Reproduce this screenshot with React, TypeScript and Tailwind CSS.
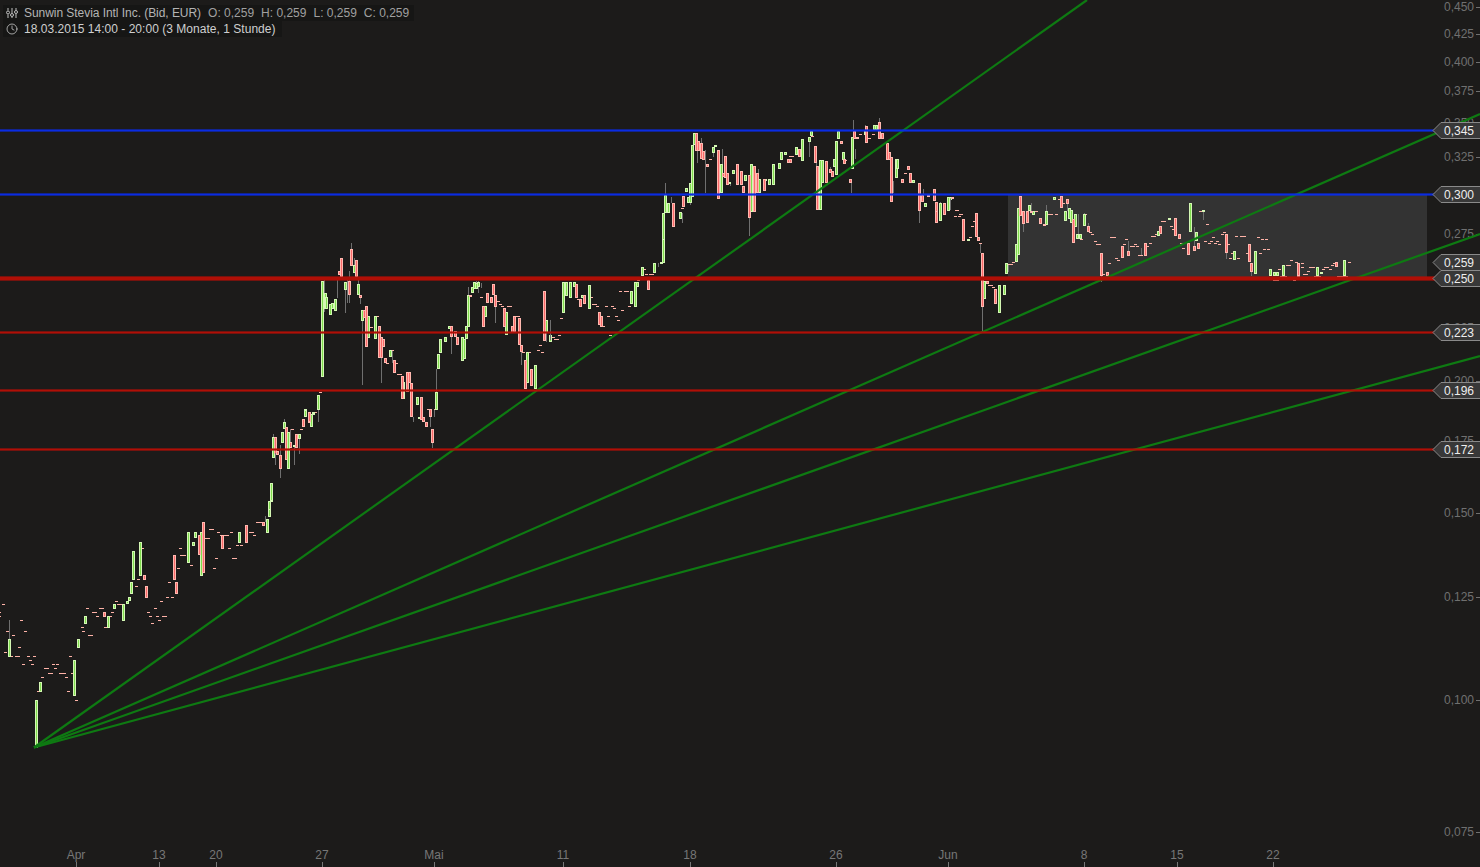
import React from 'react'
import { Clock } from 'lucide-react'

type Section = {
  ox: number
  oy: number
  up: number[][] // center x, top, bottom (in 3x crop coords)
  down: number[][]
  wicks: number[][]
  dashes: number[][] // center x, y, width
}

const sections: Section[] = [
  {
    ox: 0, oy: 500,
    up: [[109,600,745],[121,547,575],[223,481,587],[235,418,443],[256,349,371],[28,418,470],[325,349,383],[343,313,326],[370,313,362],[382,304,313],[388,292,304],[394,247,281],[400,154,239],[421,127,227],[565,97,188],[580,127,137],[586,97,115],[604,97,227],[718,97,128],[802,58,98],[808,4,50],[814,0,5]],
    down: [[313,337,350],[433,226,239],[439,259,293],[523,166,239],[529,247,281],[598,106,166],[610,67,218],[667,106,146],[739,76,128],[790,67,77]],
    wicks: [[28,360,418],[796,48,67]],
    dashes: [[8,313,8],[0,337,6],[0,349,3],[64,361,8],[20,394,8],[40,406,8],[76,394,8],[58,442,8],[14,457,8],[34,469,8],[50,469,14],[85,469,8],[103,469,8],[91,481,8],[70,493,8],[97,493,8],[139,505,14],[160,493,8],[172,493,8],[166,505,8],[151,520,14],[127,532,8],[185,520,22],[217,520,8],[199,532,8],[205,574,8],[229,601,8],[115,574,8],[211,469,8],[245,382,8],[250,394,8],[271,406,14],[262,325,8],[283,337,14],[304,325,14],[292,349,8],[337,337,8],[328,349,14],[319,382,14],[349,304,8],[361,313,20],[409,259,8],[415,238,8],[427,145,8],[445,337,8],[451,349,8],[457,370,8],[466,325,8],[472,349,8],[478,361,8],[484,304,8],[493,349,14],[502,292,8],[517,292,8],[508,247,8],[535,205,8],[541,145,8],[550,166,18],[574,196,8],[622,115,14],[634,88,14],[649,175,8],[643,205,8],[655,97,8],[672,106,28],[688,145,8],[694,97,8],[703,175,14],[712,136,8],[724,136,8],[754,97,14],[763,106,8],[778,67,22]],
  },
  {
    ox: 260, oy: 230,
    up: [[187,152,440],[195,190,236],[199,202,236],[211,222,254],[217,220,236],[226,208,242],[256,156,180],[283,105,130],[295,162,196],[307,241,272],[325,258,325],[346,259,328],[391,361,380],[430,455,508],[472,500,524],[478,562,568],[529,487,540],[535,373,418],[541,328,368],[556,322,335],[568,289,296],[607,322,392],[613,328,386],[619,289,328],[625,196,290],[637,172,190],[643,155,178],[649,158,178],[655,155,172],[676,229,260],[739,247,316],[802,367,460],[826,405,478],[859,271,310],[871,316,335],[175,496,540],[136,538,562],[154,552,592],[160,546,554],[40,622,685],[67,607,638],[73,576,598],[85,606,690],[103,645,652],[118,613,628]],
    down: [[244,85,140],[238,124,134],[274,58,107],[289,91,140],[268,152,196],[301,196,203],[313,240,264],[319,229,352],[358,289,385],[364,322,385],[370,328,352],[376,385,400],[403,391,428],[427,439,508],[442,427,487],[448,427,460],[454,460,562],[484,502,570],[490,562,576],[499,577,592],[511,538,562],[517,598,638],[574,289,322],[586,304,322],[592,322,346],[631,196,202],[670,229,290],[682,190,220],[694,202,220],[700,163,196],[706,196,230],[733,235,290],[757,289,310],[763,259,307],[778,265,346],[784,346,367],[796,391,478],[814,418,468],[853,184,334],[46,622,672],[52,664,676],[61,676,690],[79,592,690],[91,637,655],[109,613,655],[130,568,592],[148,547,578]],
    wicks: [[274,40,58],[283,85,105],[268,124,218],[232,140,205],[192,150,245],[256,180,250],[262,150,218],[295,150,162],[301,203,222],[307,272,464],[364,385,458],[397,361,400],[460,562,575],[511,562,590],[523,540,560],[529,418,487],[517,638,655],[574,322,372],[625,170,196],[649,152,158],[655,152,188],[664,160,174],[706,230,280],[784,367,404],[859,310,335],[871,271,312],[175,540,575],[118,628,672],[103,652,690],[91,598,640],[61,645,676],[40,612,622],[73,568,576]],
    dashes: [[333,290,8],[350,259,8],[418,433,14],[409,400,8],[382,400,8],[397,361,8],[181,487,8],[163,547,8],[97,598,8],[124,598,8],[508,538,12],[526,538,8],[664,202,8],[715,214,8],[721,223,8],[727,229,8],[748,229,14],[770,259,14],[790,367,8],[808,367,8],[835,361,8],[841,346,8],[847,367,8],[880,322,8],[889,328,14],[898,316,8]],
  },
  {
    ox: 255, oy: 410,
    up: [[100,67,178],[49,220,274],[43,274,300],[151,0,22],[169,12,52],[175,6,12]],
    down: [[76,136,178],[145,28,52],[163,6,37]],
    wicks: [[76,178,204],[118,112,166],[61,130,166],[190,6,35]],
    dashes: [[112,58,8],[139,58,8],[181,6,8]],
  },
  {
    ox: 540, oy: 230,
    up: [[70,157,248],[79,157,198],[91,157,204],[103,157,172],[127,196,205],[148,166,236],[274,184,222],[286,157,230],[292,157,172],[307,112,138],[343,100,128],[370,0,98],[364,96,100]],
    down: [[109,163,204],[121,208,230],[133,196,222],[178,247,286],[184,259,290],[325,151,180]],
    wicks: [[355,100,110],[31,271,330]],
    dashes: [[64,265,8],[163,223,14],[172,229,8],[199,229,8],[217,229,8],[223,235,8],[205,259,8],[229,259,8],[235,271,8],[247,241,8],[241,184,8],[259,184,14],[268,229,8],[187,289,14],[154,202,8],[115,208,8],[313,118,8],[319,133,8],[334,133,14],[295,151,8],[211,316,8]],
  },
  {
    ox: 640, oy: 110,
    up: [[70,310,390],[76,256,310],[85,280,310],[121,305,328],[139,235,245],[145,260,280],[151,220,278],[157,106,260],[163,68,106],[220,110,130],[226,106,110],[244,163,250],[280,181,191],[268,216,220],[316,196,212],[334,163,305],[358,208,248],[376,208,212],[388,208,225],[400,163,226],[418,160,178],[424,127,150],[436,127,135],[469,112,134],[487,88,154],[508,80,95],[514,64,78],[535,256,300],[541,151,300],[547,151,218],[583,148,172],[589,94,196],[595,64,88],[610,127,150],[637,80,178],[703,44,60],[709,44,60],[675,64,75],[767,148,204],[772,148,178],[814,211,218],[820,211,218],[856,280,290],[901,280,334],[925,262,302],[931,262,270]],
    down: [[100,280,352],[130,259,290],[169,68,124],[175,92,124],[184,100,148],[190,124,150],[202,163,172],[235,121,268],[250,190,202],[256,139,205],[262,190,226],[292,163,226],[304,184,226],[310,229,250],[328,196,325],[343,169,305],[352,190,250],[373,208,244],[445,148,160],[451,148,160],[478,118,142],[526,109,160],[532,169,300],[559,154,218],[571,178,190],[577,184,202],[604,94,102],[613,148,163],[631,208,220],[643,64,88],[652,80,88],[679,49,100],[718,37,88],[727,70,88],[742,100,150],[748,127,150],[754,142,277],[787,208,218],[805,169,181],[811,190,218],[838,220,304],[847,256,277],[865,256,262],[883,238,272],[889,277,340],[913,280,314],[937,262,268]],
    wicks: [[76,220,256],[94,262,280],[127,310,338],[151,278,285],[172,124,160],[184,85,100],[196,120,250],[220,130,140],[247,118,165],[271,220,228],[328,325,377],[355,178,190],[529,120,168],[508,95,140],[571,172,178],[640,30,64],[634,220,250],[646,118,148],[676,44,64],[718,24,37],[760,212,250],[838,304,338],[850,238,256],[901,277,280]],
    dashes: [[211,148,8],[127,295,8],[454,139,14],[517,78,8],[661,73,8],[688,85,8],[700,73,8],[796,190,8],[949,301,8],[946,319,8],[961,313,8],[958,319,8],[616,150,8]],
  },
  {
    ox: 930, oy: 190,
    up: [[30,40,94],[55,22,62],[115,148,154],[163,272,328],[207,286,368]],
    down: [[100,88,154],[139,70,142],[145,142,154],[157,190,350],[19,64,100],[43,40,74],[67,20,28],[196,298,343],[172,272,283]],
    wicks: [[151,160,190],[157,350,424],[61,28,60]],
    dashes: [[82,61,8],[76,79,8],[88,79,8],[94,73,8],[121,142,8],[127,109,8],[133,94,8],[150,160,8],[178,286,8],[184,286,8],[190,292,8]],
  },
  {
    ox: 970, oy: 185,
    up: [[103,301,331],[109,235,268],[139,178,232],[145,70,211],[178,61,77],[190,78,89],[229,79,120],[253,37,44],[286,79,109],[298,70,103],[304,76,115],[316,88,127],[322,148,163],[331,148,163],[343,88,124],[565,139,154],[598,100,103],[661,55,142],[679,142,169],[700,76,79],[793,199,226],[856,199,268],[901,253,274],[913,262,274],[922,262,274],[940,241,274],[1042,247,274],[1054,262,268],[1123,226,274]],
    down: [[151,34,94],[160,79,118],[172,79,115],[184,79,85],[211,100,116],[223,118,124],[274,34,70],[292,43,56],[310,103,175],[355,124,142],[394,205,274],[412,262,272],[457,184,220],[475,199,214],[526,175,214],[571,124,148],[616,100,154],[628,148,163],[655,175,211],[673,184,199],[685,175,193],[769,148,205],[838,178,232],[844,235,262],[985,235,274],[1099,232,247]],
    wicks: [[115,240,260],[160,118,140],[184,55,79],[229,60,79],[292,56,79],[325,88,148],[343,84,90],[355,115,124],[394,274,290],[475,168,199],[514,190,214],[673,127,184],[700,79,106],[769,205,223],[844,262,274]],
    dashes: [[120,238,14],[130,232,10],[199,79,8],[240,88,16],[259,88,8],[268,43,8],[280,55,8],[334,163,8],[346,88,8],[361,142,8],[367,148,8],[376,169,8],[385,178,14],[400,268,12],[418,235,8],[429,157,18],[439,220,8],[445,226,8],[463,178,8],[469,163,8],[487,184,14],[496,178,8],[502,184,8],[511,211,14],[532,184,8],[541,175,8],[550,154,14],[559,148,8],[580,109,14],[604,124,8],[610,133,8],[634,175,8],[640,190,8],[691,79,8],[712,118,8],[706,169,8],[718,175,8],[724,169,8],[730,157,8],[736,175,8],[742,169,8],[748,178,8],[757,148,8],[763,142,8],[775,178,8],[781,220,8],[787,205,8],[799,154,8],[805,220,8],[820,154,18],[832,205,8],[865,157,8],[871,205,8],[877,163,8],[889,163,8],[883,193,8],[895,193,8],[928,253,8],[955,241,14],[964,226,8],[979,232,8],[997,235,8],[997,247,8],[1006,268,14],[1015,259,8],[1025,247,18],[1060,253,8],[1069,247,14],[1081,253,8],[1087,241,8],[1093,235,8],[1138,232,8],[1042,274,20],[1117,274,32],[973,286,8],[917,286,18],[940,274,20],[985,274,8]],
  },
]

const axisLabels: [string, number][] = [
  ['0,450', 7], ['0,425', 34], ['0,400', 62], ['0,375', 91], ['0,350', 123], ['0,325', 157],
  ['0,275', 234], ['0,225', 328], ['0,200', 381], ['0,175', 441], ['0,150', 513], ['0,125', 597],
  ['0,100', 700], ['0,075', 832],
]

const timeLabels: [string, number][] = [
  ['Apr', 76], ['13', 159], ['20', 216], ['27', 322], ['Mai', 434], ['11', 563],
  ['18', 690], ['26', 836], ['Jun', 948], ['8', 1084], ['15', 1177], ['22', 1273],
]

const priceTags: [string, number][] = [
  ['0,345', 130], ['0,300', 194], ['0,259', 262], ['0,250', 278], ['0,223', 332], ['0,196', 390], ['0,172', 449],
]

const fanEnds = [[1087, 0], [1480, 114], [1480, 234], [1480, 356]]

const levels = [
  { y: 129, h: 3, color: '#0a2ce2' },
  { y: 193, h: 3, color: '#0a2ce2' },
  { y: 276, h: 5, color: '#b00f06' },
  { y: 331, h: 3, color: '#b00f06' },
  { y: 389, h: 3, color: '#b00f06' },
  { y: 448, h: 3, color: '#b00f06' },
]

function Candles({ s }: { s: Section }) {
  const px = (z: number) => Math.round(s.ox + z / 3)
  const py = (z: number) => Math.round(s.oy + z / 3)
  const bar = (b: number[], edge: string, core: string, key: string) => {
    const x = px(b[0]) - 1
    const y = py(b[1])
    const h = Math.max(py(b[2]) - y, 2)
    return (
      <g key={key}>
        <rect x={x} y={y} width={3} height={h} fill={edge} />
        {h > 2 && <rect x={x + 1} y={y + 1} width={1} height={h - 2} fill={core} />}
      </g>
    )
  }
  return (
    <g shapeRendering="crispEdges">
      {s.wicks.map((w, i) => (
        <rect key={'w' + i} x={px(w[0])} y={py(w[1])} width={1} height={py(w[2]) - py(w[1])} fill="#6f6f6f" />
      ))}
      {s.dashes.map((d, i) => {
        const w = Math.max(Math.round(d[2] / 3), 1)
        return <rect key={'d' + i} x={px(d[0]) - Math.floor(w / 2)} y={py(d[1])} width={w} height={1} fill="#ffb3a8" />
      })}
      {s.up.map((b, i) => bar(b, '#d4f7b4', '#7fdc4e', 'u' + i))}
      {s.down.map((b, i) => bar(b, '#ffb9b0', '#f96a6a', 'r' + i))}
    </g>
  )
}

function PriceTag({ label, y }: { label: string; y: number }) {
  return (
    <g>
      <polygon
        points={`1433,${y + 0.5} 1441,${y - 7.5} 1481,${y - 7.5} 1481,${y + 8.5} 1441,${y + 8.5}`}
        fill="#383838"
        stroke="#8a8a8a"
        strokeWidth="1"
      />
      <text x={1444} y={y + 5} fontSize="12" fill="#eeeeee">{label}</text>
    </g>
  )
}

export default function App() {
  return (
    <div className="relative w-[1480px] h-[867px] overflow-hidden bg-[#1c1b1a] font-['Liberation_Sans',Arial,sans-serif]">
      <svg width="1480" height="867" viewBox="0 0 1480 867" className="block">
        {/* Achsen */}
        {axisLabels.map(([label, y]) => (
          <g key={label}>
            <text x={1444} y={y + 4} fontSize="12" fill="#707070">{label}</text>
            <rect x={1476} y={y} width={4} height={1} fill="#707070" />
          </g>
        ))}
        {timeLabels.map(([label, x]) => (
          <g key={label}>
            <text x={x} y={859} fontSize="12" fill="#777777" textAnchor="middle">{label}</text>
            <rect x={x} y={862} width={1} height={5} fill="#777777" />
          </g>
        ))}

        <rect x={1008} y={194} width={419} height={84} fill="#333333" />

        {sections.map((s, i) => <Candles key={i} s={s} />)}

        {/* Fan lines */}
        {fanEnds.map(([x, y], i) => (
          <line key={i} x1={34} y1={747.5} x2={x} y2={y} stroke="#0e7a12" strokeWidth="2.2" />
        ))}

        <g shapeRendering="crispEdges">
          {levels.map(l => (
            <g key={l.y}>
              <rect x={0} y={l.y} width={1480} height={l.h} fill={l.color} opacity={0.6} />
              <rect x={0} y={l.y + 1} width={1480} height={l.h - 2} fill={l.color} />
            </g>
          ))}
        </g>

        {priceTags.map(([label, y]) => <PriceTag key={label} label={label} y={y} />)}
      </svg>

      {/* Chart header */}
      <div className="absolute left-[3px] top-[5px] flex flex-col items-start text-[12px] leading-[16px]">
        <div className="flex items-center gap-[6px] bg-[#161615] pl-[3px] pr-[5px] h-[16px] text-[#a8a8a8]">
          <svg width="12" height="12" viewBox="0 0 12 12" fill="none" stroke="#c0c0c0" strokeWidth="1">
            <path d="M2 1v2.5M2 7.5V11M6 1v5M6 10v1M10 1v2M10 7v4" />
            <circle cx="2" cy="5.5" r="1.5" />
            <circle cx="6" cy="8" r="1.5" />
            <circle cx="10" cy="5" r="1.5" />
          </svg>
          <span className="tracking-[-0.05px] text-[#b4b4b4]">Sunwin Stevia Intl Inc. (Bid, EUR)</span>
          <span className="ml-[1px] flex gap-[7px] text-[#a0a0a0]">
            <span>O: 0,259</span>
            <span>H: 0,259</span>
            <span>L: 0,259</span>
            <span>C: 0,259</span>
          </span>
        </div>
        <div className="flex items-center gap-[6px] bg-[#161615] pl-[3px] pr-[6px] h-[16px] text-[#cfcfcf]">
          <Clock size={12} strokeWidth={1.5} className="text-[#d0d0d0]" />
          <span className="tracking-[0.03px]">18.03.2015 14:00 - 20:00 (3 Monate, 1 Stunde)</span>
        </div>
      </div>
    </div>
  )
}
